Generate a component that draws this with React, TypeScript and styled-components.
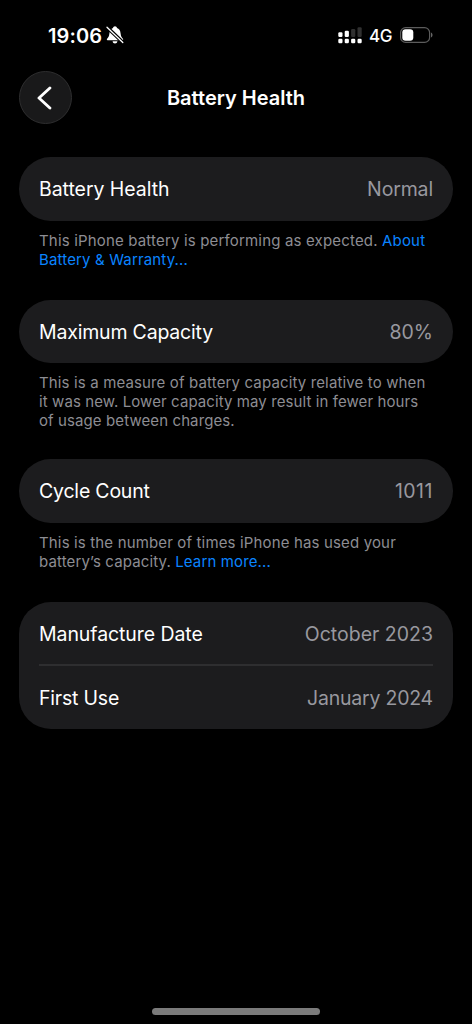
import React from "react";
import styled, { createGlobalStyle } from "styled-components";

const GlobalStyle = createGlobalStyle`
  * { box-sizing: border-box; }
  html, body { margin: 0; background: #000; }
  body {
    font-family: Inter, "Liberation Sans", sans-serif;
    font-feature-settings: "calt" 0;
    color: #fff;
  }
`;

const Screen = styled.div`
  width: 472px;
  height: 1024px;
  display: flex;
  flex-direction: column;
  background: #000;
  overflow: hidden;
`;

const StatusBar = styled.header`
  height: 71px;
  padding: 0 39px 0 48px;
  display: flex;
  justify-content: space-between;
`;

const StatusGroup = styled.div`
  display: flex;
  height: 70px;
  align-items: center;
`;

const Clock = styled.span`
  font-size: 20px;
  font-weight: 600;
  letter-spacing: 0.1px;
  width: 57px;
  margin-top: 1px;
  white-space: nowrap;
`;

const Network = styled.span`
  font-size: 17px;
  font-weight: 500;
  width: 23px;
  margin: 1px 8px 0 7px;
  letter-spacing: -0.4px;
`;

const NavBar = styled.nav`
  height: 53px;
  padding: 0 19px;
  display: grid;
  grid-template-columns: 53px 1fr 53px;
  align-items: center;
`;

const BackButton = styled.button`
  width: 53px;
  height: 53px;
  padding: 0;
  border: 1px solid #2e2e2f;
  border-radius: 50%;
  background: #19191a;
  display: grid;
  place-items: center;
`;

const Title = styled.h1`
  margin: 0;
  text-align: center;
  font-size: 20px;
  line-height: 24px;
  font-weight: 600;
  letter-spacing: 0;
`;

const Content = styled.main`
  flex: 1;
  padding: 33.4px 19px 0;
`;

const Section = styled.section<{ $height: number }>`
  height: ${(p) => p.$height}px;
`;

const Card = styled.div<{ $radius: number }>`
  width: 434px;
  padding: 0 20px;
  border-radius: ${(p) => p.$radius}px;
  background: #1c1c1e;
`;

const Row = styled.div<{ $divided?: boolean }>`
  height: ${(p) => (p.$divided ? 64 : 63.4)}px;
  padding-top: ${(p) => (p.$divided ? 2 : 0)}px;
  display: flex;
  align-items: center;
  justify-content: space-between;
  font-size: 19.5px;
  line-height: 24px;
  border-bottom: ${(p) => (p.$divided ? "2px solid #2e2e30" : "0")};
`;

const Label = styled.span<{ $tracking: number }>`
  letter-spacing: ${(p) => p.$tracking}px;
`;

const Value = styled(Label)`
  color: #98989f;
`;

const Footnote = styled.p`
  margin: 0;
  padding: 10.1px 20px 0;
  color: #8d8d93;
  font-size: 15px;
  line-height: 19px;
`;

const Line = styled.span<{ $tracking: number }>`
  display: block;
  white-space: nowrap;
  letter-spacing: ${(p) => p.$tracking}px;
`;

const Link = styled.a`
  color: #0a84ff;
`;

const HomeArea = styled.footer`
  height: 20px;
  display: flex;
  justify-content: center;
  padding-top: 4px;
`;

const HomeIndicator = styled.div`
  width: 168px;
  height: 7px;
  border-radius: 3.5px;
  background: #7b7b7b;
`;

const BellIcon = styled.svg`
  display: block;
  margin-left: 1px;
`;

const SignalIcon = styled.svg`
  display: block;
  margin-top: 2px;
`;

function MutedBell() {
  return (
    <BellIcon width="18" height="18" viewBox="0 0 18 18">
      <path
        d="M1.5 14.2c-.7 0-.9-.8-.4-1.4 1.2-1.3 2-2.2 2.3-5.3C3.7 4.300 5 2.700 7 2.100 7.200.9 8 .2 9 .2s1.800.7 2 1.900c2 .6 3.300 2.200 3.600 5.400.3 3.100 1.100 4 2.300 5.300.5.6.3 1.400-.4 1.400zM6.600 15.200h4.800c-.2 1.300-1.100 2.300-2.400 2.300s-2.200-1-2.400-2.300z"
        fill="#fff"
      />
      <path d="M1.2 1.3 17 16.5" stroke="#000" strokeWidth="3.6" />
      <path d="M1 1.2 16.8 16.5" stroke="#fff" strokeWidth="1.3" strokeLinecap="round" />
    </BellIcon>
  );
}

function Signal() {
  return (
    <SignalIcon width="24" height="18" viewBox="0 0 24 18">
      {[0, 1, 2, 3].map((i) => (
        <rect key={i} x={0.3 + i * 6.4} y="11.8" width="4.2" height="4.4" rx="1.2" fill="#fff" />
      ))}
      <rect x="0.3" y="5.2" width="4.2" height="4.8" rx="1.2" fill="#fff" />
      <rect x="6.7" y="3.8" width="4.2" height="6.2" rx="1.2" fill="#fff" />
      <rect x="13.1" y="2" width="4.2" height="8" rx="1.2" fill="#303030" />
      <rect x="19.5" y="0.2" width="4.2" height="9.8" rx="1.2" fill="#303030" />
    </SignalIcon>
  );
}

function Battery() {
  return (
    <svg width="33" height="16" viewBox="0 0 33 16">
      <rect x="0.6" y="0.6" width="29" height="14.8" rx="5" fill="none" stroke="#5c5c5c" strokeWidth="1.2" />
      <rect x="2.3" y="2.3" width="11" height="11.4" rx="3.3" fill="#fff" />
      <path d="M31 5.5c2 .8 2 4.2 0 5z" fill="#666" />
    </svg>
  );
}

export default function App() {
  return (
    <Screen>
      <GlobalStyle />
      <StatusBar>
        <StatusGroup>
          <Clock>19:06</Clock>
          <MutedBell />
        </StatusGroup>
        <StatusGroup>
          <Signal />
          <Network>4G</Network>
          <Battery />
        </StatusGroup>
      </StatusBar>
      <NavBar>
        <BackButton aria-label="Back">
          <svg width="18" height="24" viewBox="0 0 18 24">
            <path
              d="M12.9 2 2 12l10.9 10"
              fill="none"
              stroke="#fff"
              strokeWidth="2.9"
              strokeLinecap="round"
              strokeLinejoin="round"
            />
          </svg>
        </BackButton>
        <Title>Battery Health</Title>
      </NavBar>
      <Content>
        <Section $height={142.6}>
          <Card $radius={31.7}>
            <Row>
              <Label $tracking={-0.05}>Battery Health</Label>
              <Value $tracking={-0.15}>Normal</Value>
            </Row>
          </Card>
          <Footnote>
            <Line $tracking={0.17}>
              This iPhone battery is performing as expected. <Link>About</Link>
            </Line>
            <Line $tracking={0.15}>
              <Link>Battery &amp; Warranty...</Link>
            </Line>
          </Footnote>
        </Section>
        <Section $height={159.4}>
          <Card $radius={31.7}>
            <Row>
              <Label $tracking={-0.19}>Maximum Capacity</Label>
              <Value $tracking={0}>80%</Value>
            </Row>
          </Card>
          <Footnote>
            <Line $tracking={0.14}>This is a measure of battery capacity relative to when</Line>
            <Line $tracking={0.09}>it was new. Lower capacity may result in fewer hours</Line>
            <Line $tracking={0.1}>of usage between charges.</Line>
          </Footnote>
        </Section>
        <Section $height={142.6}>
          <Card $radius={31.7}>
            <Row>
              <Label $tracking={-0.2}>Cycle Count</Label>
              <Value $tracking={0.5}>1011</Value>
            </Row>
          </Card>
          <Footnote>
            <Line $tracking={0.15}>This is the number of times iPhone has used your</Line>
            <Line $tracking={0.13}>
              battery’s capacity. <Link>Learn more...</Link>
            </Line>
          </Footnote>
        </Section>
        <Section $height={127}>
          <Card $radius={32}>
            <Row $divided>
              <Label $tracking={-0.08}>Manufacture Date</Label>
              <Value $tracking={0}>October 2023</Value>
            </Row>
            <Row>
              <Label $tracking={-0.2}>First Use</Label>
              <Value $tracking={-0.22}>January 2024</Value>
            </Row>
          </Card>
        </Section>
      </Content>
      <HomeArea>
        <HomeIndicator />
      </HomeArea>
    </Screen>
  );
}
